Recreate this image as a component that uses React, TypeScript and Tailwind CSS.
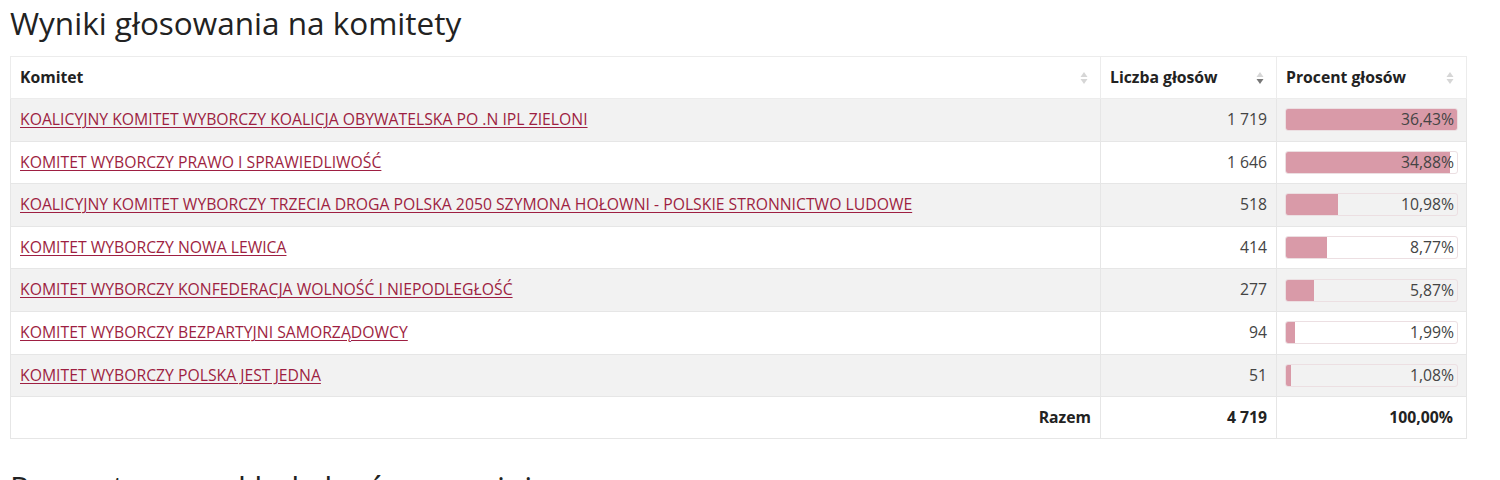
import React from 'react';

const rows = [
  { name: 'KOALICYJNY KOMITET WYBORCZY KOALICJA OBYWATELSKA PO .N IPL ZIELONI', votes: '1 719', pct: 36.43 },
  { name: 'KOMITET WYBORCZY PRAWO I SPRAWIEDLIWOŚĆ', votes: '1 646', pct: 34.88 },
  { name: 'KOALICYJNY KOMITET WYBORCZY TRZECIA DROGA POLSKA 2050 SZYMONA HOŁOWNI - POLSKIE STRONNICTWO LUDOWE', votes: '518', pct: 10.98 },
  { name: 'KOMITET WYBORCZY NOWA LEWICA', votes: '414', pct: 8.77 },
  { name: 'KOMITET WYBORCZY KONFEDERACJA WOLNOŚĆ I NIEPODLEGŁOŚĆ', votes: '277', pct: 5.87 },
  { name: 'KOMITET WYBORCZY BEZPARTYJNI SAMORZĄDOWCY', votes: '94', pct: 1.99 },
  { name: 'KOMITET WYBORCZY POLSKA JEST JEDNA', votes: '51', pct: 1.08 },
];

const maxPct = Math.max(...rows.map((r) => r.pct));

const fmt = (n: number) => n.toFixed(2).replace('.', ',') + '%';

const SortIcon = ({ active }: { active?: 'up' | 'down' }) => (
  <svg width="8" height="14" viewBox="0 0 8 14" className="shrink-0">
    <path d="M4 1 L7.5 6 L0.5 6 Z" fill={active === 'up' ? '#777' : '#d6d6d6'} />
    <path d="M4 13 L7.5 8 L0.5 8 Z" fill={active === 'down' ? '#777' : '#d6d6d6'} />
  </svg>
);

const App = () => {
  return (
    <div className="w-[1500px] h-[480px] overflow-hidden bg-white px-[10px] pt-[4px] font-['Open_Sans',sans-serif] text-[15.75px] text-[#444]">
      <h1 className="text-[31.5px] leading-[38px] text-[#222] mb-[14px]">Wyniki głosowania na komitety</h1>

      <table className="w-[1456px] table-fixed border-collapse border border-[#e8e8e8]">
        <colgroup>
          <col className="w-[1090px]" />
          <col className="w-[176px]" />
          <col className="w-[190px]" />
        </colgroup>
        <thead>
          <tr className="h-[42px] bg-white">
            <th className="border border-[#ececec] pl-[9px] pr-[12px] text-left font-bold text-[#222]">
              <div className="flex items-center justify-between">
                <span>Komitet</span>
                <SortIcon />
              </div>
            </th>
            <th className="border border-[#ececec] pl-[9px] pr-[12px] text-left font-bold text-[#222]">
              <div className="flex items-center justify-between">
                <span>Liczba głosów</span>
                <SortIcon active="down" />
              </div>
            </th>
            <th className="border border-[#ececec] pl-[9px] pr-[12px] text-left font-bold text-[#222]">
              <div className="flex items-center justify-between">
                <span>Procent głosów</span>
                <SortIcon />
              </div>
            </th>
          </tr>
        </thead>
        <tbody>
          {rows.map((r, i) => (
            <tr key={r.name} className={`h-[42.6px] ${i % 2 === 0 ? 'bg-[#f2f2f2]' : 'bg-white'}`}>
              <td className="border border-[#e6e6e6] pl-[9px] pr-[9px]">
                <a href="#" className="text-[#9e1f42] underline underline-offset-2 decoration-1 whitespace-nowrap">
                  {r.name}
                </a>
              </td>
              <td className="border border-[#e6e6e6] pr-[9px] text-right">{r.votes}</td>
              <td className="border border-[#e6e6e6] pl-[8px] pr-[9px]">
                <div className="relative h-[23px] w-[173px] rounded-[3px] border border-[#ecdfe2] overflow-hidden">
                  <div
                    className="absolute left-0 top-0 bottom-0 bg-[#d99aa8]"
                    style={{ width: `${(r.pct / maxPct) * 100}%` }}
                  />
                  <div className="relative pr-[3px] text-right leading-[21px]">{fmt(r.pct)}</div>
                </div>
              </td>
            </tr>
          ))}
        </tbody>
        <tfoot>
          <tr className="h-[42px] bg-white font-bold text-[#222]">
            <td className="border border-[#e6e6e6] pr-[9px] text-right">Razem</td>
            <td className="border border-[#e6e6e6] pr-[9px] text-right">4 719</td>
            <td className="border border-[#e6e6e6] pr-[13px] text-right">100,00%</td>
          </tr>
        </tfoot>
      </table>

      <h2 className="mt-[29px] text-[31.5px] leading-[38px] text-[#222]">Procentowy rozkład głosów w gminie</h2>
    </div>
  );
};

export default App;
